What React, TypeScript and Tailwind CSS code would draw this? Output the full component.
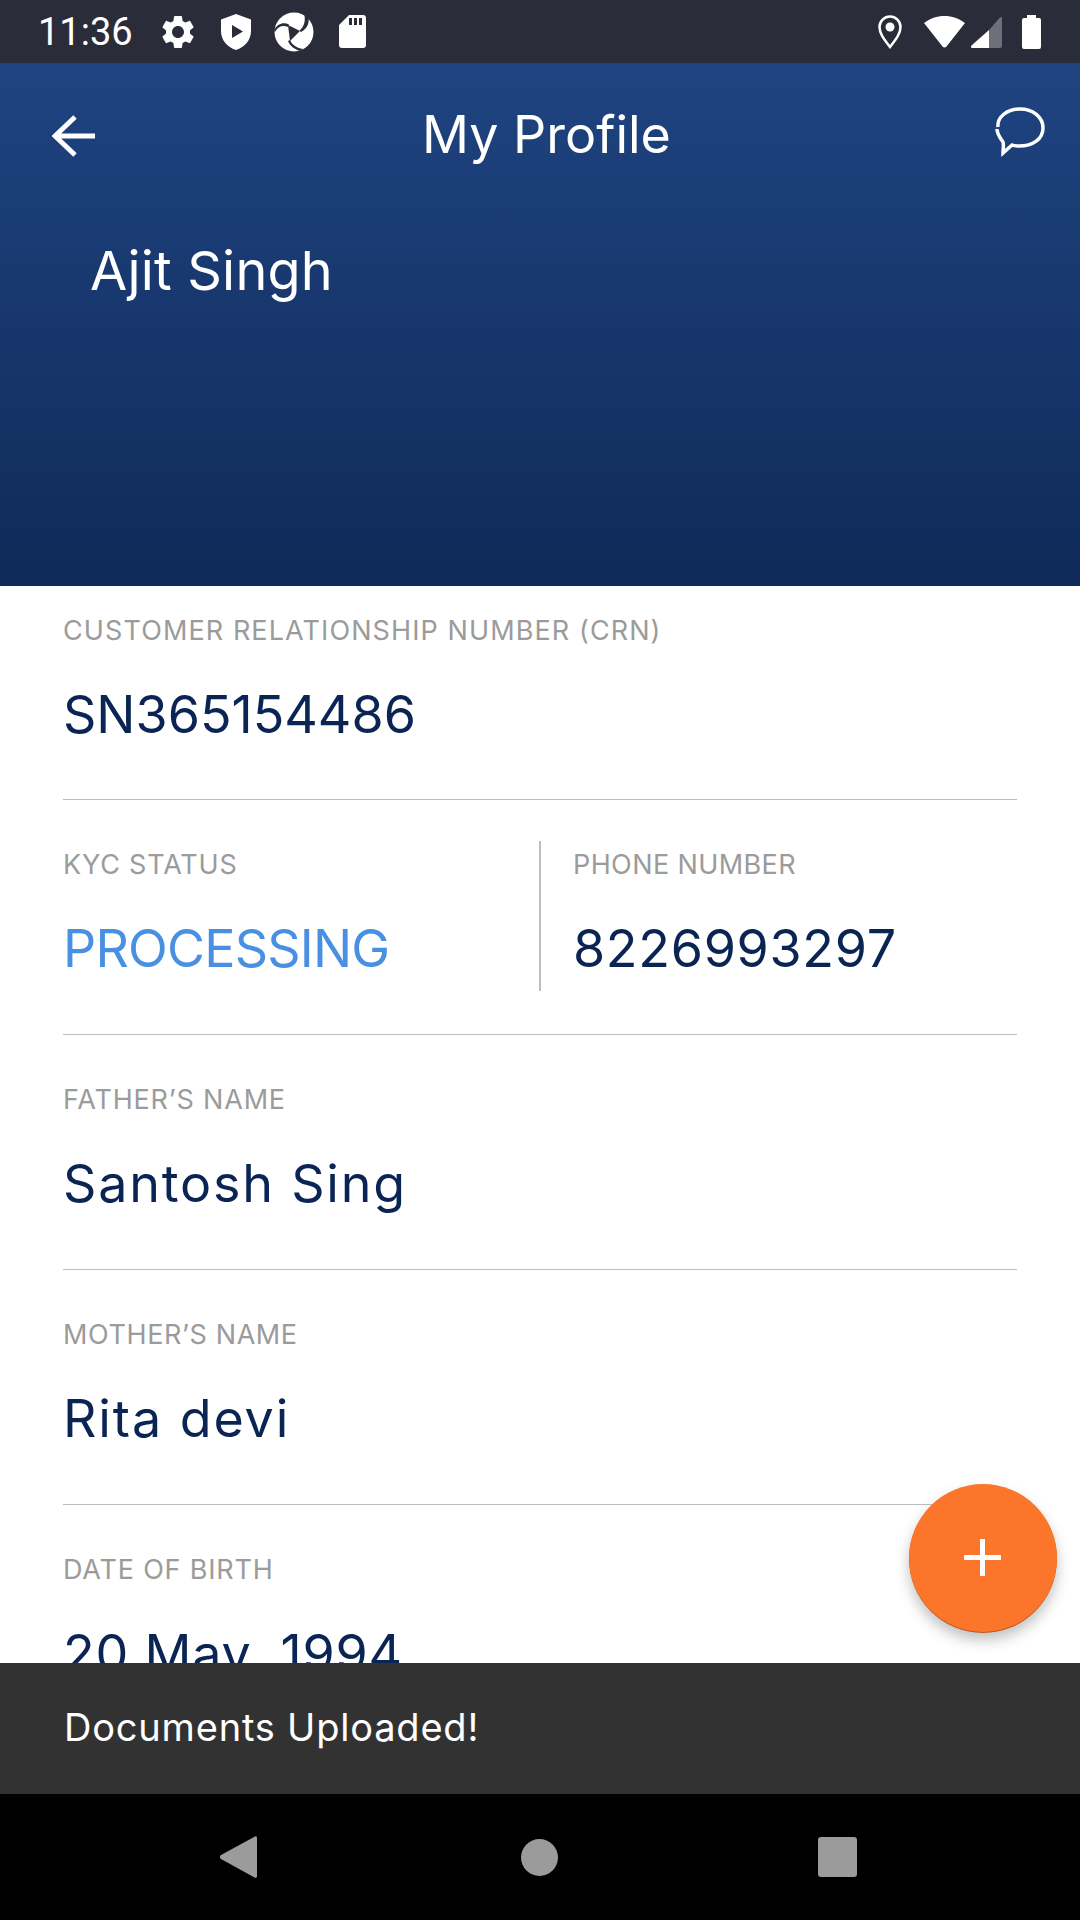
const fontUi = "font-['Inter','Noto_Sans',sans-serif]"

function StatusBar() {
  return (
    <div className="flex h-[63px] shrink-0 items-center bg-[#2a2d39] pl-[38px] text-white">
      <span className="w-[124px] font-['Roboto',sans-serif] text-[38px] leading-none">11:36</span>
      <svg className="h-[40px] w-[40px] -ml-[4px]" viewBox="0 0 24 24" fill="#fff">
        <path d="M19.14 12.94c.04-.3.06-.61.06-.94 0-.32-.02-.64-.07-.94l2.03-1.58c.18-.14.23-.41.12-.61l-1.92-3.32c-.12-.22-.37-.29-.59-.22l-2.39.96c-.5-.38-1.03-.7-1.62-.94l-.36-2.54c-.04-.24-.24-.41-.48-.41h-3.84c-.24 0-.43.17-.47.41l-.36 2.54c-.59.24-1.13.57-1.62.94l-2.39-.96c-.22-.08-.47 0-.59.22L2.74 8.87c-.12.21-.08.47.12.61l2.03 1.58c-.05.3-.09.63-.09.94s.02.64.07.94l-2.03 1.58c-.18.14-.23.41-.12.61l1.92 3.32c.12.22.37.29.59.22l2.39-.96c.5.38 1.03.7 1.62.94l.36 2.54c.05.24.24.41.48.41h3.84c.24 0 .44-.17.47-.41l.36-2.54c.59-.24 1.13-.56 1.62-.94l2.39.96c.22.08.47 0 .59-.22l1.92-3.32c.12-.22.07-.47-.12-.61l-2.01-1.58zM12 15.6c-1.98 0-3.6-1.62-3.6-3.6s1.62-3.6 3.6-3.6 3.6 1.62 3.6 3.6-1.62 3.6-3.6 3.6z" />
      </svg>
      <svg className="ml-[23px] h-[36px] w-[30px]" viewBox="0 0 30 36">
        <path fill="#fff" fillRule="evenodd" d="M15 0 30 5.500V17c0 9-6 16-15 19C6 33 0 26 0 17V5.500zM11 11v13l11-6.500z" />
      </svg>
      <svg className="ml-[23px] h-[40px] w-[40px]" viewBox="0 0 40 40">
        <circle cx="20" cy="20" r="19.500" fill="#fff" />
        <path fill="#2a2d39" d="M14 13 26 19 16 29z" />
        <path fill="#2a2d39" d="M0 18C4 11 10 10 15 12.500L14 15C9 13 4 14 1 20zM34 3c2 7 0 13-7 17l-1.500-1.500C30 15 32 9 30 1zM16 28c2 5 7 8 13 9l-3 2c-6-2-10-5-12-10z" />
      </svg>
      <svg className="ml-[25px] h-[33px] w-[27px]" viewBox="0 0 27 33">
        <path fill="#fff" fillRule="evenodd" d="M10 0H24a3 3 0 0 1 3 3V30a3 3 0 0 1-3 3H3a3 3 0 0 1-3-3V10zM10 3v7h3V3zM15 3v7h3V3zM20 3v7h3V3z" />
      </svg>
      <svg className="ml-[512px] h-[34px] w-[24px]" viewBox="0 0 24 34">
        <path fill="none" stroke="#fff" strokeWidth="2.500" d="M12 32C5 23 1.500 18 1.500 12a10.500 10.500 0 0 1 21 0c0 6-3.500 11-10.500 20z" />
        <circle cx="12" cy="12" r="4.500" fill="#fff" />
      </svg>
      <svg className="ml-[22px] h-[32px] w-[41px]" viewBox="0 0 41 32">
        <path fill="#fff" d="M20.500 0C28 0 35 2.500 41 7L22.500 30.500a2.500 2.500 0 0 1-4 0L0 7C6 2.500 13 0 20.500 0z" />
      </svg>
      <svg className="ml-[6px] h-[32px] w-[31px]" viewBox="0 0 31 32">
        <path fill="#6e7079" d="M18 14 29 1.500c1-1 2-.5 2 1V30a2 2 0 0 1-2 2H18z" />
        <path fill="#fff" d="M18 14V32H1.500c-1.500 0-2-1.500-1-2.500z" />
      </svg>
      <svg className="ml-[20px] h-[34px] w-[19px]" viewBox="0 0 19 34">
        <path fill="#fff" d="M5 0H14V3H17a2 2 0 0 1 2 2V32a2 2 0 0 1-2 2H2a2 2 0 0 1-2-2V5a2 2 0 0 1 2-2H5z" />
      </svg>
    </div>
  )
}

function Header() {
  return (
    <div className="h-[523px] shrink-0 bg-gradient-to-b from-[#1f4481] to-[#0f2a58] text-white">
      <div className="flex h-[146px] items-center pl-[52px]">
        <svg className="h-[42px] w-[43px]" viewBox="0 0 43 42" fill="none" stroke="#fff" strokeWidth="5">
          <path d="M43 21H4M23 2 3 21 23 40" />
        </svg>
        <h1 className="-mt-[3px] ml-[327px] w-[300px] text-[52px] leading-none">My Profile</h1>
        <svg className="ml-[273px] -mt-[8px] h-[50px] w-[50px]" viewBox="0 0 50 50" fill="none" stroke="#fff" strokeWidth="3.500">
          <path d="M3 20C2 10 12 2 25 2c13 0 23 8 23 19s-10 18-24 18c-3 0-5 0-7-1l-9 8c0-4 1-8 0-11-3-4-6-8-6-13" />
        </svg>
      </div>
      <p className="ml-[90px] mt-[32px] text-[54px] leading-[60px] tracking-[0.2px]">Ajit Singh</p>
    </div>
  )
}

function Field({
  label,
  value,
  labelClass,
  valueClass,
}: {
  label: string
  value: string
  labelClass?: string
  valueClass?: string
}) {
  return (
    <div>
      <p className={`text-[27px] leading-[34px] text-[#9b9b9b] ${labelClass ?? "tracking-[0.8px]"}`}>{label}</p>
      <p className={`mt-[37px] text-[52px] leading-[60px] ${valueClass ?? "text-[#0a2554]"}`}>{value}</p>
    </div>
  )
}

export default function App() {
  return (
    <div className={`relative flex h-[1920px] w-[1080px] flex-col overflow-hidden bg-white ${fontUi}`}>
      <StatusBar />
      <Header />
      <div className="min-h-0 flex-1 overflow-hidden px-[63px]">
        <div className="h-[214px] border-b border-[#bdbdbd] pt-[28px]">
          <Field label="CUSTOMER RELATIONSHIP NUMBER (CRN)" value="SN365154486" labelClass="tracking-[1.1px]" />
        </div>
        <div className="h-[235px] border-b border-[#bdbdbd] pt-[41px]">
          <div className="flex h-[150px]">
            <div className="w-[478px] border-r-2 border-[#bdbdbd] pt-[7px]">
              <Field label="KYC STATUS" value="PROCESSING" valueClass="tracking-[-0.8px] text-[#4a90e2]" />
            </div>
            <div className="pl-[32px] pt-[7px]">
              <Field label="PHONE NUMBER" value="8226993297" labelClass="tracking-[0.4px]" valueClass="tracking-[0.7px] text-[#0a2554]" />
            </div>
          </div>
        </div>
        <div className="h-[235px] border-b border-[#bdbdbd] pt-[48px]">
          <Field label="FATHER’S NAME" value="Santosh Sing" valueClass="tracking-[1.8px] text-[#0a2554]" />
        </div>
        <div className="h-[235px] border-b border-[#bdbdbd] pt-[48px]">
          <Field label="MOTHER’S NAME" value="Rita devi" labelClass="tracking-[0.6px]" valueClass="tracking-[1.9px] text-[#0a2554]" />
        </div>
        <div className="pt-[48px]">
          <Field label="DATE OF BIRTH" value="20 May, 1994" valueClass="tracking-[0.8px] text-[#0a2554]" />
        </div>
      </div>
      <div className="flex h-[131px] shrink-0 items-center bg-[#323232] pb-[3px] pl-[64px] text-[38px] tracking-[0.8px] text-white">Documents Uploaded!</div>
      <div className="flex h-[126px] shrink-0 items-center bg-black pl-[220px]">
        <svg className="h-[42px] w-[37px]" viewBox="0 0 37 42">
          <path fill="#9b9b9b" d="M35 .500c1-.500 2 0 2 1.500V40c0 1.500-1 2.500-2.500 1.500L1 23c-1.500-1-1.500-3 0-4z" />
        </svg>
        <div className="ml-[264px] h-[37px] w-[37px] rounded-full bg-[#9b9b9b]" />
        <div className="ml-[260px] h-[40px] w-[39px] rounded-[3px] bg-[#9b9b9b]" />
      </div>
      <button className="absolute left-[909px] top-[1484px] flex h-[148px] w-[148px] items-center justify-center rounded-full bg-[#fb752a] pr-[1px] pb-[2px] shadow-[0_8px_14px_rgba(0,0,0,0.25),0_1px_0_#ee6f28]">
        <svg className="h-[37px] w-[37px]" viewBox="0 0 37 37" fill="#fff">
          <path d="M16 0H21V16H37V21H21V37H16V21H0V16H16z" />
        </svg>
      </button>
    </div>
  )
}
